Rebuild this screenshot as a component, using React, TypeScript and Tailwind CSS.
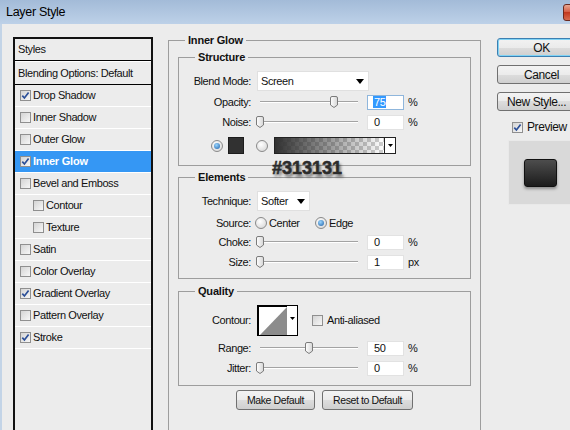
import React from "react";

function Check({ checked }: { checked?: boolean }) {
  return (
    <span className="w-[11px] h-[11px] shrink-0 border border-[#8f8f8f] bg-[linear-gradient(135deg,#d4d4d4,#f7f7f7)] flex items-center justify-center">
      {checked && (
        <svg width="9" height="9" viewBox="0 0 9 9">
          <path d="M1.3 4.6 L3.4 7 L7.6 1.4" stroke="#2b4f98" strokeWidth="1.7" fill="none" />
        </svg>
      )}
    </span>
  );
}

function Radio({ on }: { on?: boolean }) {
  return (
    <span className="w-[12px] h-[12px] rounded-full border border-[#8a8a8a] bg-[radial-gradient(circle_at_40%_35%,#ffffff,#d2d2d2)] flex items-center justify-center shrink-0">
      {on && <span className="w-[6px] h-[6px] rounded-full bg-[radial-gradient(circle_at_40%_35%,#9ad6ff,#1d5ea6)]" />}
    </span>
  );
}

function Label({ children }: { children: React.ReactNode }) {
  return <span className="w-[72px] shrink-0 text-right">{children}</span>;
}

function Slider({ v }: { v: number }) {
  return (
    <div className="relative ml-[6px] w-[108px] h-[16px] shrink-0">
      <div className="absolute left-[3px] top-[7px] w-[98px] h-[2px] border-t border-[#a3a3a3] bg-white" />
      <svg
        className="absolute top-[2px]"
        style={{ left: 3 + v * 0.98 - 4 }}
        width="8"
        height="12"
        viewBox="0 0 8 12"
      >
        <defs>
          <linearGradient id="tg" x1="0" x2="1" y1="0" y2="0">
            <stop offset="0" stopColor="#ffffff" />
            <stop offset="1" stopColor="#d6d6d6" />
          </linearGradient>
        </defs>
        <path d="M2 0.5 H6 A1.5 1.5 0 0 1 7.5 2 V9 L4 11.5 L0.5 9 V2 A1.5 1.5 0 0 1 2 0.5 Z" fill="url(#tg)" stroke="#7b7b7b" />
      </svg>
    </div>
  );
}

function Input({ v, focused }: { v: string; focused?: boolean }) {
  return (
    <div
      className={
        focused
          ? "ml-[2px] w-[37px] h-[15px] bg-white border border-[#8fb6dc] pl-[5px] flex items-center shrink-0"
          : "ml-[2px] w-[37px] h-[15px] bg-white border border-[#e2e2e2] pl-[6px] flex items-center shrink-0"
      }
    >
      {focused ? <span className="bg-[#3399ff] text-white px-[1px] leading-[12px]">{v}</span> : v}
    </div>
  );
}

function SliderRow({ label, v, val, unit, focused, cls }: { label: string; v: number; val: string; unit: string; focused?: boolean; cls: string }) {
  return (
    <div className={"flex items-center h-[16px] " + cls}>
      <Label>{label}</Label>
      <Slider v={v} />
      <Input v={val} focused={focused} />
      <span className="ml-[4px]">{unit}</span>
    </div>
  );
}

function Select({ w, text }: { w: string; text: string }) {
  return (
    <div className={"ml-[6px] h-[20px] bg-white border border-[#e0e0e0] flex items-center justify-between pl-[3px] pr-[4px] " + w}>
      <span>{text}</span>
      <svg width="8" height="5" viewBox="0 0 8 5">
        <path d="M0 0 H8 L4 5 Z" fill="#000" />
      </svg>
    </div>
  );
}

function Group({ title, className, legend, children }: { title: string; className: string; legend?: string; children: React.ReactNode }) {
  return (
    <fieldset className={"border border-[#9d9d9d] " + className}>
      <legend className={(legend ?? "ml-[16px]") + " px-[3px] font-bold leading-[14px] tracking-[-0.2px]"}>{title}</legend>
      {children}
    </fieldset>
  );
}

const items: { label: string; checked?: boolean; active?: boolean; indent?: boolean }[] = [
  { label: "Drop Shadow", checked: true },
  { label: "Inner Shadow" },
  { label: "Outer Glow" },
  { label: "Inner Glow", checked: true, active: true },
  { label: "Bevel and Emboss" },
  { label: "Contour", indent: true },
  { label: "Texture", indent: true },
  { label: "Satin" },
  { label: "Color Overlay" },
  { label: "Gradient Overlay", checked: true },
  { label: "Pattern Overlay" },
  { label: "Stroke", checked: true },
];

const btn =
  "rounded-[3px] border border-[#707070] bg-[linear-gradient(#f3f3f3,#ebebeb_50%,#dddddd_50%,#cfcfcf)] flex items-center justify-center";

export default function App() {
  return (
    <div className="w-[570px] h-[430px] overflow-hidden bg-[#ececec] font-['Liberation_Sans',Arial,sans-serif] text-[11px] leading-[13px] tracking-[-0.4px] text-[#111]">
      <div className="w-[612px]">
        {/* title bar */}
        <div className="h-[24px] flex items-start bg-[linear-gradient(#a3bbd8,#bdd1e8)]">
          <span className="ml-[6px] mt-[5px] text-[12.5px] leading-[15px] tracking-[-0.3px] text-black">Layer Style</span>
          <span className="ml-auto mr-[6px] mt-[4px] w-[43px] h-[17px] rounded-[3px] border border-[#6b2a20] bg-[linear-gradient(#eaa892,#d2573e_50%,#c2391f_50%,#d76b4e)]" />
        </div>

        <div className="flex border-l-[2px] border-[#c3d4e7] h-[406px]">
          {/* left list */}
          <div className="ml-[11px] mt-[13px] w-[140px] h-[420px] border-2 border-[#111] shrink-0 flex flex-col">
            <div className="h-[21px] flex items-center pl-[3px]">Styles</div>
            <div className="h-[1px] bg-black" />
            <div className="h-[1px] bg-white" />
            <div className="h-[23px] border-b border-black flex items-center pl-[3px]">Blending Options: Default</div>
            {items.map((it) => (
              <div
                key={it.label}
                className={
                  (it.active ? "bg-[#3597f4] text-white font-bold tracking-[-0.2px] " : "") +
                  (it.indent ? "pl-[18px] " : "pl-[5px] ") +
                  "h-[22px] border-b border-white flex items-center gap-[2px]"
                }
              >
                <Check checked={it.checked} />
                <span>{it.label}</span>
              </div>
            ))}
          </div>

          {/* middle */}
          <div className="relative ml-[15px] mt-[9px] w-[313px] shrink-0">
            <Group title="Inner Glow" legend="ml-[7px]" className="w-[313px] px-[9px] pt-[3px] pb-[40px]">
              <Group title="Structure" className="pt-[7px] pb-[11px]">
                <div className="flex items-center h-[20px]">
                  <Label>Blend Mode:</Label>
                  <Select w="w-[112px]" text="Screen" />
                </div>
                <SliderRow cls="mt-[3px]" label="Opacity:" v={75} val="75" unit="%" focused />
                <SliderRow cls="mt-[4px]" label="Noise:" v={0} val="0" unit="%" />
                <div className="mt-[7px] h-[17px] flex items-center">
                  <span className="ml-[32px]">
                    <Radio on />
                  </span>
                  <span className="ml-[5px] w-[16px] h-[17px] bg-[#313131] border border-[#1c1c1c]" />
                  <span className="ml-[12px]">
                    <Radio />
                  </span>
                  <div className="ml-[6px] w-[122px] h-[17px] border border-[#222] flex">
                    <div className="flex-1 bg-[conic-gradient(#cfcfcf_25%,#ffffff_0_50%,#cfcfcf_0_75%,#ffffff_0)] bg-[length:8px_8px]">
                      <div className="w-full h-full bg-gradient-to-r from-[#313131] to-transparent" />
                    </div>
                    <div className="w-[11px] border-l border-[#222] bg-white flex items-center justify-center">
                      <svg width="5" height="3" viewBox="0 0 5 3">
                        <path d="M0 0 H5 L2.5 3 Z" fill="#000" />
                      </svg>
                    </div>
                  </div>
                </div>
              </Group>

              <Group title="Elements" className="mt-[4px] pt-[7px] pb-[8px]">
                <div className="flex items-center h-[20px]">
                  <Label>Technique:</Label>
                  <Select w="w-[53px]" text="Softer" />
                </div>
                <div className="mt-[5px] h-[14px] flex items-center">
                  <Label>Source:</Label>
                  <div className="ml-[4px] w-[60px] flex items-center">
                    <Radio />
                    <span className="ml-[2px]">Center</span>
                  </div>
                  <Radio on />
                  <span className="ml-[2px]">Edge</span>
                </div>
                <SliderRow cls="mt-[4px]" label="Choke:" v={0} val="0" unit="%" />
                <SliderRow cls="mt-[4px]" label="Size:" v={0} val="1" unit="px" />
              </Group>

              <Group title="Quality" className="mt-[5px] pt-[7px] pb-[9px]">
                <div className="flex items-center h-[31px]">
                  <Label>Contour:</Label>
                  <svg className="ml-[6px]" width="41" height="31" viewBox="0 0 41 31">
                    <rect x="0.5" y="0.5" width="40" height="30" fill="#fff" stroke="#000" />
                    <rect x="1" y="1" width="29" height="1" fill="#000" />
                    <rect x="1" y="1" width="1" height="29" fill="#000" />
                    <polygon points="3,30 30,2 30,30" fill="#8c8c8c" />
                    <path d="M33 12 H38 L35.5 15 Z" fill="#000" />
                  </svg>
                  <span className="ml-[14px]">
                    <Check />
                  </span>
                  <span className="ml-[4px]">Anti-aliased</span>
                </div>
                <SliderRow cls="mt-[4px]" label="Range:" v={50} val="50" unit="%" />
                <SliderRow cls="mt-[4px]" label="Jitter:" v={0} val="0" unit="%" />
              </Group>

              <div className="mt-[4px] flex justify-center gap-[7px]">
                <div className={btn + " w-[79px] h-[20px] text-[10.5px]"}>Make Default</div>
                <div className={btn + " w-[91px] h-[20px] text-[10.5px]"}>Reset to Default</div>
              </div>
            </Group>

            <span className="absolute left-[104px] top-[126px] text-[18px] leading-[18px] font-bold tracking-normal text-[#2c2c2c] [-webkit-text-stroke:0.5px_#2c2c2c] [text-shadow:2px_3px_3px_rgba(0,0,0,0.55)]">
              #313131
            </span>
          </div>

          {/* right column */}
          <div className="ml-[16px] mt-[14px] w-[89px] shrink-0 flex flex-col text-[12px] leading-[14px]">
            <div className="h-[19px] rounded-[3px] border border-[#3c7fb1] bg-[linear-gradient(#f2f2f2,#ebebeb_50%,#dddddd_50%,#cfcfcf)] shadow-[inset_0_0_0_1px_#7fd3f5] flex items-center justify-center">
              OK
            </div>
            <div className={btn + " mt-[8px] h-[19px]"}>Cancel</div>
            <div className={btn + " mt-[8px] h-[19px] justify-start pl-[9px]"}>New Style...</div>
            <div className="mt-[9px] h-[14px] flex items-center pl-[15px]">
              <Check checked />
              <span className="ml-[4px]">Preview</span>
            </div>
            <div className="mt-[6px] ml-[11px] w-[64px] h-[65px] bg-[#d9d9d9] border border-[#e9e9e9] flex items-center justify-center">
              <div className="w-[33px] h-[28px] rounded-[3px] bg-[linear-gradient(#4d4d4d,#1c1c1c)] border border-[#111] shadow-[0_2px_3px_rgba(0,0,0,0.35)]" />
            </div>
          </div>
        </div>
      </div>
    </div>
  );
}
